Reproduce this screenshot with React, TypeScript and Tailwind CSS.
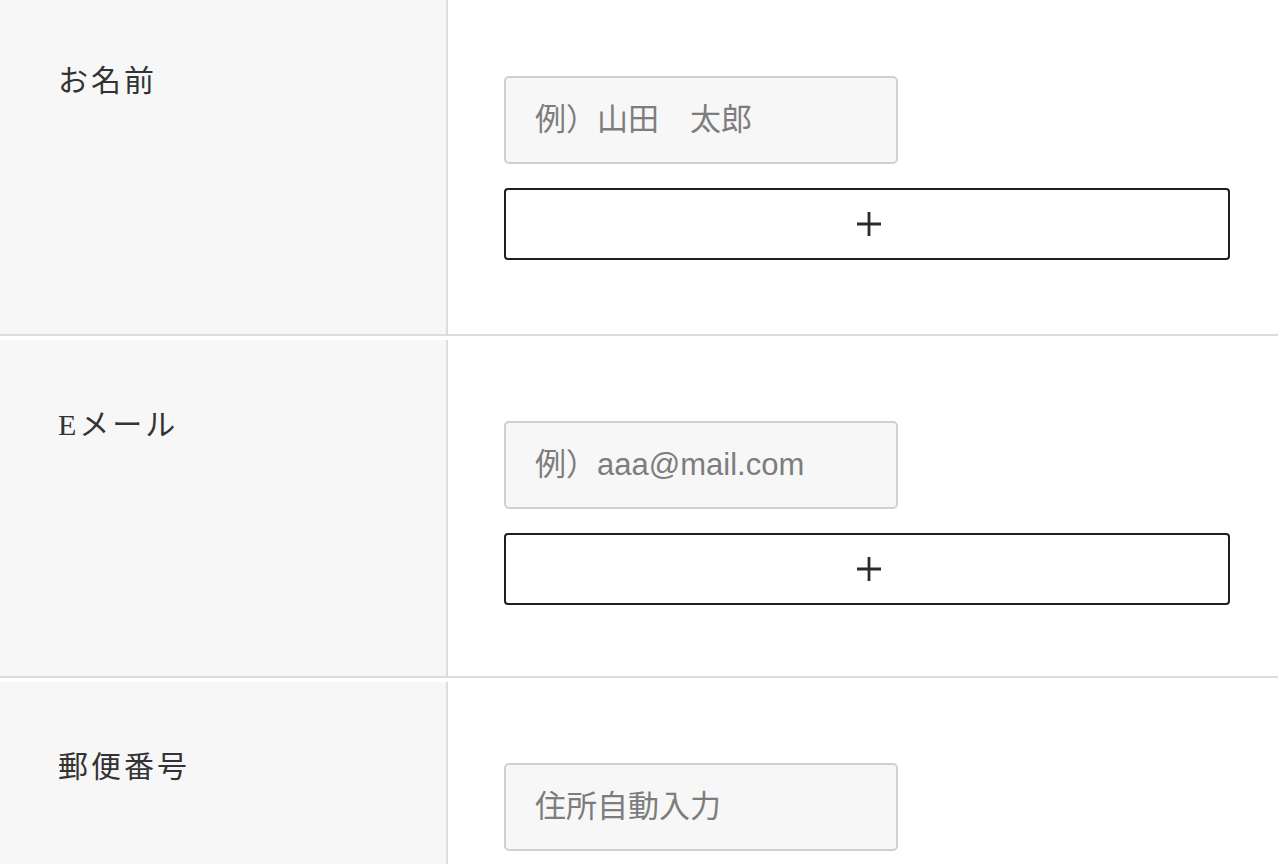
import React from "react";

const rows = [
  { label: "お名前", placeholder: "例）山田　太郎", addable: true },
  { label: "Eメール", placeholder: "例）aaa@mail.com", addable: true },
  { label: "郵便番号", placeholder: "住所自動入力", addable: false },
];

function PlusIcon() {
  return (
    <svg width="26" height="26" viewBox="0 0 26 26" aria-hidden="true">
      <path d="M1 13h24M13 1v24" stroke="#2b2b2b" strokeWidth="2.8" fill="none" />
    </svg>
  );
}

function FormRow({
  label,
  placeholder,
  addable,
  first,
}: {
  label: string;
  placeholder: string;
  addable: boolean;
  first: boolean;
}) {
  return (
    <div className="mb-1 flex border-b-2 border-[#dddddd]">
      <div
        className={`w-[448px] shrink-0 border-r-2 border-[#dddddd] bg-[#f7f7f7] pl-[58px] ${
          first ? "pt-[58px]" : "pt-[62px]"
        }`}
      >
        <span
          className="text-[30px] leading-[45px] tracking-[3px] text-[#333333]"
          style={{ fontFamily: '"Liberation Serif", "Noto Sans CJK JP", serif' }}
        >
          {label}
        </span>
      </div>
      <div
        className={`flex flex-1 flex-col gap-[24px] pl-[56px] pr-[48px] ${
          first ? "pt-[76px] pb-[74px]" : "pt-[81px] pb-[71px]"
        }`}
      >
        <input
          type="text"
          placeholder={placeholder}
          className="h-[88px] w-[394px] rounded-[5px] border-2 border-[#d0d0d0] bg-[#f7f7f7] px-[29px] text-[31px] text-[#333] outline-none placeholder:text-[#7d7d7d]"
          style={{ fontFamily: '"Liberation Sans", "Noto Sans CJK JP", sans-serif' }}
        />
        {addable && (
          <button
            type="button"
            className="flex h-[72px] w-full items-center justify-center rounded-[4px] border-2 border-[#1f1f1f] bg-white pl-[3px]"
          >
            <PlusIcon />
          </button>
        )}
      </div>
    </div>
  );
}

export default function App() {
  return (
    <div className="h-[864px] w-full overflow-hidden bg-white">
      {rows.map((row, i) => (
        <FormRow key={row.label} {...row} first={i === 0} />
      ))}
    </div>
  );
}
